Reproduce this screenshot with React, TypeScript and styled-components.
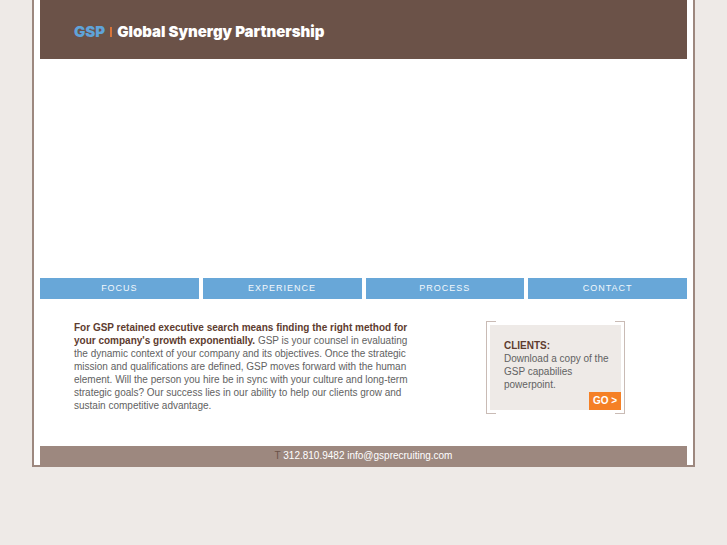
import React from 'react';
import styled, { createGlobalStyle } from 'styled-components';

const GlobalStyle = createGlobalStyle`
  * { box-sizing: border-box; }
  body {
    margin: 0;
    background: #eeeae7;
    color: #626262;
    font: 10px/13px "Liberation Sans", Arial, sans-serif;
  }
`;

const Page = styled.div`
  margin: 0 32px;
  padding: 0 6px;
  background: #fff;
  border: 2px solid #9d887f;
  border-top: 0;
`;

const Header = styled.header`
  padding: 22px 34px 17px;
  background: #6b5248;
`;

const Brand = styled.h1`
  display: flex;
  align-items: center;
  gap: 5px;
  margin: 0;
  color: #fff;
  font: 900 15px/20px Inter, "Arial Black", sans-serif;
  white-space: nowrap;
`;

const Initials = styled.span`
  color: #5fa3d9;
`;

const Divider = styled.span`
  width: 2px;
  height: 10px;
  background: #d9743a;
`;

const Hero = styled.section`
  height: 219px;
`;

const Nav = styled.nav`
  display: grid;
  grid-template-columns: repeat(4, 1fr);
  gap: 4px;
`;

const NavLink = styled.a`
  padding: 4px 0;
  background: #68a7d8;
  color: #f2f8fc;
  font-size: 9px;
  letter-spacing: 1px;
  text-align: center;
  text-decoration: none;
`;

const Main = styled.main`
  display: flex;
  justify-content: space-between;
  align-items: flex-start;
  gap: 24px;
  padding: 22px 62px 32px 34px;
`;

const Intro = styled.p`
  flex: 0 1 344px;
  margin: 0;
`;

const Strong = styled.strong`
  color: #5e3c2f;
`;

const Bracketed = styled.aside`
  position: relative;
  flex: 0 0 139px;
  padding: 4px;
`;

const Bracket = styled.span<{ $side: 'left' | 'right' }>`
  position: absolute;
  top: 0;
  bottom: 0;
  ${({ $side }) => $side}: 0;
  width: 10px;
  border: 1px solid #c9bbb5;
  border-${({ $side }) => ($side === 'left' ? 'right' : 'left')}: 0;
`;

const Card = styled.div`
  display: flex;
  flex-direction: column;
  background: #eeeae7;
  padding-top: 14px;
`;

const CardText = styled.p`
  margin: 0;
  padding: 0 0 1px 14px;
`;

const CardTitle = styled(Strong)`
  display: block;
`;

const GoButton = styled.button`
  align-self: flex-end;
  width: 32px;
  height: 18px;
  padding: 0;
  border: 0;
  background: #f58025;
  color: #fff;
  font: bold 10px/18px "Liberation Sans", Arial, sans-serif;
`;

const Footer = styled.footer`
  padding: 3px 0;
  background: #9d887f;
  color: #fff;
  text-align: center;
`;

const PhoneLabel = styled.span`
  color: #6b5248;
`;

const FooterLink = styled.a`
  color: inherit;
  text-decoration: none;
`;

const sections = ['FOCUS', 'EXPERIENCE', 'PROCESS', 'CONTACT'];

export default function App() {
  return (
    <>
      <GlobalStyle />
      <Page>
        <Header>
          <Brand>
            <Initials>GSP</Initials>
            <Divider />
            <span>Global Synergy Partnership</span>
          </Brand>
        </Header>
        <Hero />
        <Nav>
          {sections.map((name) => (
            <NavLink key={name} href={`#${name.toLowerCase()}`}>{name}</NavLink>
          ))}
        </Nav>
        <Main>
          <Intro>
            <Strong>
              For GSP retained executive search means finding the right method for your
              company's growth exponentially.
            </Strong>{' '}
            GSP is your counsel in evaluating the dynamic context of your company and its
            objectives. Once the strategic mission and qualifications are defined, GSP moves
            forward with the human element. Will the person you hire be in sync with your
            culture and long-term strategic goals? Our success lies in our ability to help our
            clients grow and sustain competitive advantage.
          </Intro>
          <Bracketed>
            <Bracket $side="left" />
            <Bracket $side="right" />
            <Card>
              <CardText>
                <CardTitle>CLIENTS:</CardTitle>
                Download a copy of the GSP capabilies powerpoint.
              </CardText>
              <GoButton type="button">GO &gt;</GoButton>
            </Card>
          </Bracketed>
        </Main>
        <Footer>
          <PhoneLabel>T</PhoneLabel> 312.810.9482{' '}
          <FooterLink href="mailto:info@gsprecruiting.com">info@gsprecruiting.com</FooterLink>
        </Footer>
      </Page>
    </>
  );
}
